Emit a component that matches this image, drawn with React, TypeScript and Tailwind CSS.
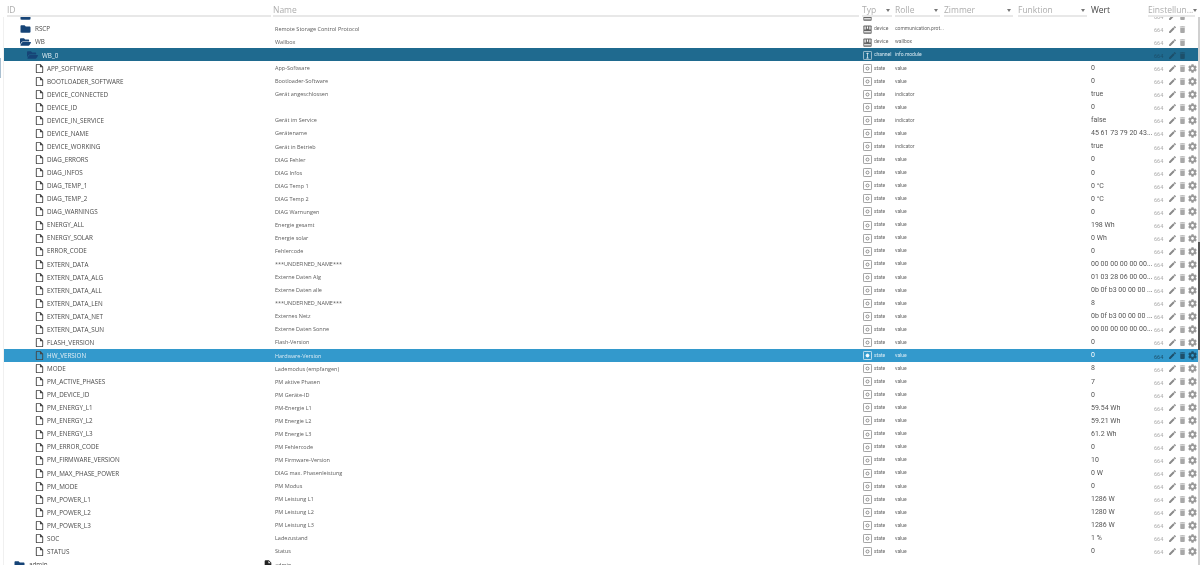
import { FaCog, FaFolder, FaFolderOpen } from "react-icons/fa";
import { MdDelete, MdEdit, MdInsertDriveFile, MdOutlineInsertDriveFile } from "react-icons/md";

type Kind = "state" | "device" | "channel";

type Row = {
  id: string;
  name?: string;
  kind?: Kind;
  role?: string;
  value?: string;
  level?: "root" | "top" | "folder" | "sub" | "leaf";
  open?: boolean;
  selected?: "channel" | "state";
};

const leaf = (id: string, name: string, value: string, role = "value"): Row => ({
  id,
  name,
  value,
  role,
  kind: "state",
  level: "leaf",
});

const rows: Row[] = [
  { id: "RSCP", name: "Remote Storage Control Protocol", kind: "device", role: "communication.prot...", level: "folder" },
  { id: "WB", name: "Wallbox", kind: "device", role: "wallbox", level: "folder", open: true },
  { id: "WB_0", kind: "channel", role: "info.module", level: "sub", open: true, selected: "channel" },
  leaf("APP_SOFTWARE", "App-Software", "0"),
  leaf("BOOTLOADER_SOFTWARE", "Bootloader-Software", "0"),
  leaf("DEVICE_CONNECTED", "Gerät angeschlossen", "true", "indicator"),
  leaf("DEVICE_ID", "", "0"),
  leaf("DEVICE_IN_SERVICE", "Gerät im Service", "false", "indicator"),
  leaf("DEVICE_NAME", "Gerätename", "45 61 73 79 20 43..."),
  leaf("DEVICE_WORKING", "Gerät in Betrieb", "true", "indicator"),
  leaf("DIAG_ERRORS", "DIAG Fehler", "0"),
  leaf("DIAG_INFOS", "DIAG Infos", "0"),
  leaf("DIAG_TEMP_1", "DIAG Temp 1", "0 °C"),
  leaf("DIAG_TEMP_2", "DIAG Temp 2", "0 °C"),
  leaf("DIAG_WARNINGS", "DIAG Warnungen", "0"),
  leaf("ENERGY_ALL", "Energie gesamt", "198 Wh"),
  leaf("ENERGY_SOLAR", "Energie solar", "0 Wh"),
  leaf("ERROR_CODE", "Fehlercode", "0"),
  leaf("EXTERN_DATA", "***UNDEFINED_NAME***", "00 00 00 00 00 00..."),
  leaf("EXTERN_DATA_ALG", "Externe Daten Alg", "01 03 28 06 00 00..."),
  leaf("EXTERN_DATA_ALL", "Externe Daten alle", "0b 0f b3 00 00 00 ..."),
  leaf("EXTERN_DATA_LEN", "***UNDEFINED_NAME***", "8"),
  leaf("EXTERN_DATA_NET", "Externes Netz", "0b 0f b3 00 00 00 ..."),
  leaf("EXTERN_DATA_SUN", "Externe Daten Sonne", "00 00 00 00 00 00..."),
  leaf("FLASH_VERSION", "Flash-Version", "0"),
  { ...leaf("HW_VERSION", "Hardware-Version", "0"), selected: "state" },
  leaf("MODE", "Lademodus (empfangen)", "8"),
  leaf("PM_ACTIVE_PHASES", "PM aktive Phasen", "7"),
  leaf("PM_DEVICE_ID", "PM Geräte-ID", "0"),
  leaf("PM_ENERGY_L1", "PM-Energie L1", "59.54 Wh"),
  leaf("PM_ENERGY_L2", "PM Energie L2", "59.21 Wh"),
  leaf("PM_ENERGY_L3", "PM Energie L3", "61.2 Wh"),
  leaf("PM_ERROR_CODE", "PM Fehlercode", "0"),
  leaf("PM_FIRMWARE_VERSION", "PM Firmware-Version", "10"),
  leaf("PM_MAX_PHASE_POWER", "DIAG max. Phasenleistung", "0 W"),
  leaf("PM_MODE", "PM Modus", "0"),
  leaf("PM_POWER_L1", "PM Leistung L1", "1286 W"),
  leaf("PM_POWER_L2", "PM Leistung L2", "1280 W"),
  leaf("PM_POWER_L3", "PM Leistung L3", "1286 W"),
  leaf("SOC", "Ladezustand", "1 %"),
  leaf("STATUS", "Status", "0"),
];

function HeaderCell({ label, className }: { label: string; className: string }) {
  return (
    <div className={`flex h-[17px] items-start justify-between border-b-2 border-[#e8e8e8] pt-[6px] text-[8.5px] leading-none text-[#adadad] ${className}`}>
      <span>{label}</span>
      <span className="mr-[2px] mt-[3px] h-0 w-0 border-x-[2.5px] border-t-[3px] border-x-transparent border-t-[#777]" />
    </div>
  );
}

function TypeIcon({ kind, selected }: { kind: Kind; selected: boolean }) {
  if (kind === "device") {
    return (
      <svg viewBox="0 0 12 12" className="h-[9px] w-[9px] shrink-0">
        <rect x="0.5" y="0.5" width="11" height="11" rx="1" fill="#666" />
        <rect x="2" y="2" width="1.6" height="4" fill="#fff" />
        <rect x="5.2" y="2" width="1.6" height="3" fill="#fff" />
        <rect x="8.4" y="2" width="1.6" height="4" fill="#fff" />
        <rect x="1.5" y="8" width="9" height="2" fill="#ddd" />
      </svg>
    );
  }
  if (kind === "channel") {
    return (
      <svg viewBox="0 0 12 12" className="h-[9px] w-[9px] shrink-0" fill="none" stroke="#fff">
        <rect x="0.5" y="0.5" width="11" height="11" rx="1.5" strokeWidth="0.8" />
        <path d="M6 2.5v7M4.5 4 6 2.5 7.5 4M4.5 9.5h3" strokeWidth="0.9" />
      </svg>
    );
  }
  return (
    <svg viewBox="0 0 12 12" className="h-[9px] w-[9px] shrink-0" fill="none" stroke={selected ? "#fff" : "#777"}>
      <rect x="0.5" y="0.5" width="11" height="11" rx="1.5" strokeWidth="1" />
      <circle cx="6" cy="6" r="2" strokeWidth="1.1" fill={selected ? "#fff" : "none"} />
    </svg>
  );
}

function TreeRow({ row }: { row: Row }) {
  const channelSel = row.selected === "channel";
  const stateSel = row.selected === "state";
  const sel = channelSel || stateSel;
  const bg = channelSel ? "bg-[#1f6a8f]" : stateSel ? "bg-[#3399cc]" : "";
  const idText = sel ? "text-[#e6f0f5]" : "text-[#4a4a4a]";
  const nameText = sel ? "text-[#dcebf3]" : "text-[#5c5c5c]";
  const pencil = sel ? "text-[#1d4f6a]" : "text-[#8a8a8a]";
  const trash = sel ? "text-[#1d4f6a]" : "text-[#a8a8a8]";
  const gear = sel ? "text-[#1d4f6a]" : "text-[#999]";

  return (
    <div className={`flex h-[13.075px] items-center whitespace-nowrap pt-[1px] ${bg}`}>
      <div className={`flex w-[269px] items-center text-[6.3px] ${idText} ${row.level === "leaf" ? "pl-[30px]" : row.level === "sub" ? "pl-[23px]" : "pl-[16px]"}`}>
        {row.level === "leaf" ? (
          <MdOutlineInsertDriveFile className="h-[11px] w-[11px] text-[#444]" />
        ) : row.open ? (
          <FaFolderOpen className="h-[10px] w-[11px] text-[#164477]" />
        ) : (
          <FaFolder className="h-[10px] w-[11px] text-[#164477]" />
        )}
        <span className={row.level === "leaf" ? "ml-[2px]" : "ml-[4px]"}>{row.id}</span>
      </div>
      <div className={`w-[589px] pl-[2px] text-[5.5px] ${nameText}`}>{row.name}</div>
      <div className="flex w-[33px] items-center pl-[1px]">
        {row.kind && <TypeIcon kind={row.kind} selected={stateSel} />}
        <span className={`ml-[2px] font-['Roboto',sans-serif] text-[5px] ${sel ? "text-[#dcebf3]" : "text-[#666]"}`}>{row.kind}</span>
      </div>
      <div className={`w-[196px] font-['Roboto',sans-serif] text-[5px] ${sel ? "text-[#dcebf3]" : "text-[#666]"}`}>{row.role}</div>
      <div className={`w-[63px] font-['Roboto',sans-serif] text-[7px] ${stateSel ? "text-white" : "text-[#555]"}`}>{row.value}</div>
      <div className="flex flex-1 items-center">
        <span className={`mt-[2px] w-[14px] font-['Roboto',sans-serif] text-[5.5px] ${sel ? "text-[#1d4f6a]" : "text-[#aaa]"}`}>664</span>
        <MdEdit className={`h-[9px] w-[9px] ${pencil}`} />
        <MdDelete className={`ml-[1px] h-[9px] w-[9px] ${trash}`} />
        {row.kind === "state" && <FaCog className={`ml-[1px] h-[9px] w-[9px] ${gear}`} />}
      </div>
    </div>
  );
}

export default function App() {
  return (
    <div className="flex h-[565px] w-[1200px] flex-col overflow-hidden bg-white font-['Open_Sans',sans-serif] blur-[0.25px]">
      {/* Column filter header */}
      <div className="flex h-[17px] shrink-0">
        <div className="ml-[7px] h-[17px] w-[264px] border-b-2 border-[#e8e8e8] pt-[6px] text-[8.5px] leading-none text-[#adadad]">ID</div>
        <div className="ml-[2px] h-[17px] w-[586px] border-b-2 border-[#e8e8e8] pt-[6px] text-[8.5px] leading-none text-[#adadad]">Name</div>
        <HeaderCell label="Typ" className="ml-[3px] w-[30px]" />
        <HeaderCell label="Rolle" className="ml-[3px] w-[45px]" />
        <HeaderCell label="Zimmer" className="ml-[4px] w-[69px]" />
        <HeaderCell label="Funktion" className="ml-[5px] w-[69px]" />
        <div className="ml-[4px] w-[57px] pt-[6px] text-[8.5px] leading-none text-[#444]">Wert</div>
        <HeaderCell label="Einstellun..." className="w-[47px]" />
      </div>

      <div className="flex min-h-0 flex-1">
        {/* Outer page scrollbar remnant on the left */}
        <div className="w-[4px] shrink-0 border-r border-[#f0f0f0]">
          <div className="mt-[41px] h-[20px] w-[1px] bg-[#a9bfd0]" />
        </div>
        <div className="min-w-0 flex-1 overflow-hidden">
          <div className="mt-[-8px]">
            <TreeRow row={{ id: "", kind: "device", level: "folder" }} />
            {rows.map((row) => (
              <TreeRow key={row.id} row={row} />
            ))}
            <div className="flex h-[13.075px] items-center pt-[1px]">
              <div className="flex w-[259px] items-center pl-[10px] text-[6.3px] text-[#4a4a4a]">
                <FaFolder className="h-[10px] w-[11px] text-[#164477]" />
                <span className="ml-[4px]">admin</span>
              </div>
              <MdInsertDriveFile className="h-[11px] w-[10px] text-[#222]" />
              <div className="w-[589px] pl-[2px] text-[5.5px] text-[#5c5c5c]">admin</div>
            </div>
          </div>
        </div>
        <div className="w-[2px] shrink-0 bg-[#d0d0d0]">
          <div className="mt-[225px] h-[108px] bg-[#555]" />
        </div>
      </div>
    </div>
  );
}
